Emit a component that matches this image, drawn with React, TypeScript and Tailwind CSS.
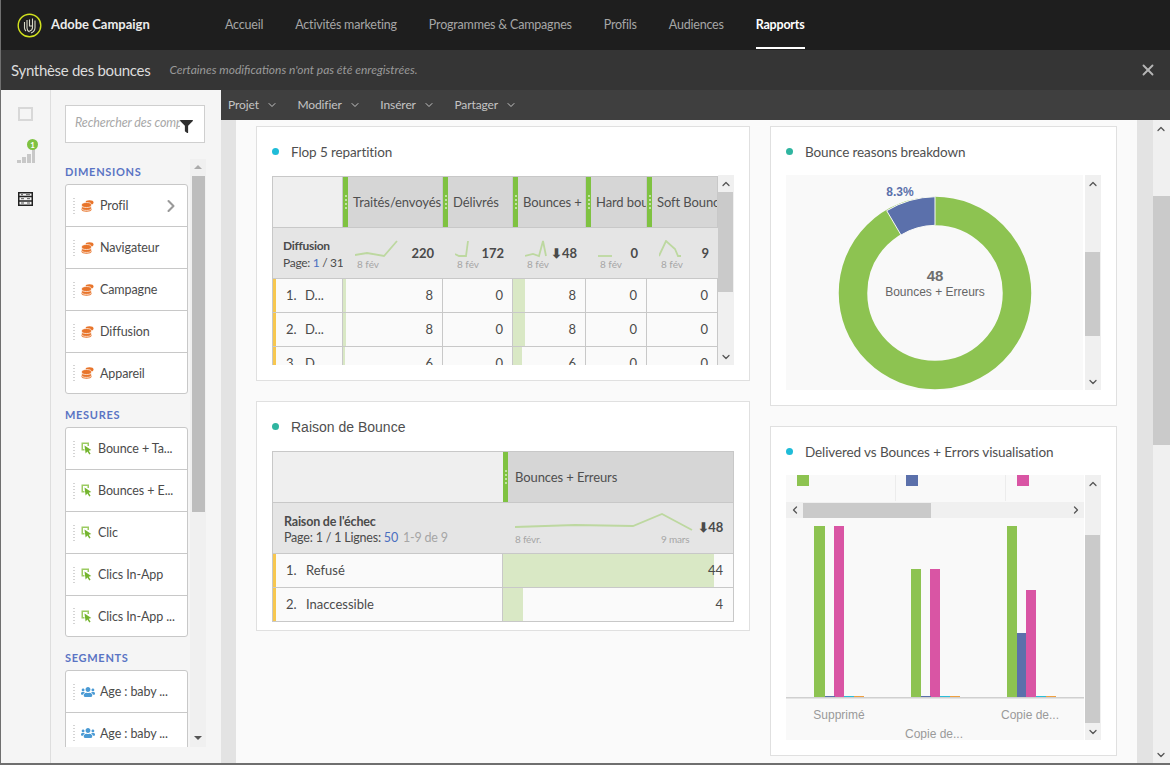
import { ChevronDown, ChevronLeft, ChevronRight, ChevronUp, X } from "lucide-react";
import { FaFilter, FaUsers } from "react-icons/fa";

const nav = ["Accueil", "Activités marketing", "Programmes & Campagnes", "Profils", "Audiences"];
const menu = ["Projet", "Modifier", "Insérer", "Partager"];
const dimensions = ["Profil", "Navigateur", "Campagne", "Diffusion", "Appareil"];
const measures = ["Bounce + Ta...", "Bounces + E...", "Clic", "Clics In-App", "Clics In-App ..."];
const segments = ["Age : baby ...", "Age : baby ..."];

const flopHeaders = ["Traités/envoyés", "Délivrés", "Bounces + Erreurs", "Hard bounces", "Soft Bounces"];
const flopSummary = [
  { value: "220", width: 44, points: "0,15 12,13 29,16 42,1" },
  { value: "172", width: 16, points: "0,14 4,16 11,16 13,1" },
  { value: "48", arrow: true, width: 24, points: "0,16 8,14 14,16 18,1 21,16" },
  { value: "0", width: 16, points: "0,16 14,16" },
  { value: "9", width: 24, points: "0,16 7,1 16,9 19,16 22,16" },
];
const flopRows = [
  { rank: "1.", values: ["8", "0", "8", "0", "0"], bars: [3, 0, 12] },
  { rank: "2.", values: ["8", "0", "8", "0", "0"], bars: [3, 0, 12] },
  { rank: "3.", values: ["6", "0", "6", "0", "0"], bars: [2, 0, 9] },
];

function Logo() {
  return (
    <svg width="25" height="25" viewBox="0 0 25 25" fill="none" className="shrink-0">
      <circle cx="12.500" cy="12.500" r="11.300" stroke="#d2e21e" strokeWidth="1.400" />
      <path d="M7.500 9v6c0 1 .5 2 1.500 3M10 7v8c0 1.500.8 3 2.500 4M15.500 5.500v9c0 2-1 3-3 3.500M18 7.500v7c0 2.500-1.500 4.500-4 5.500M12.500 6.500v6.500h3" stroke="#d9d9c8" strokeWidth="1.100" />
    </svg>
  );
}

function DataIcon() {
  return (
    <svg width="13" height="12" viewBox="0 0 13 12" className="shrink-0">
      <ellipse cx="8.500" cy="2.600" rx="4" ry="2.400" fill="#e8742a" />
      <path d="M0.500 8v1.500c0 1.300 2.200 2.300 5 2.300s5-1 5-2.300V8z" fill="#e8742a" />
      <ellipse cx="5.500" cy="8" rx="5" ry="2.400" fill="#e8742a" stroke="#fff" strokeWidth="0.700" />
      <ellipse cx="5.500" cy="5" rx="5" ry="2.500" fill="#e8742a" stroke="#fff" strokeWidth="0.700" />
    </svg>
  );
}

function MetricIcon() {
  return (
    <svg width="11" height="13" viewBox="0 0 11 13" className="shrink-0">
      <path d="M0.500 0.500h7.500v3.500h-1.500v-2h-4.500v5h1.500v1.500h-3z" fill="#9ccb62" />
      <path d="M3.500 3.500l6.800 4.500-2.600.7 1.900 3-1.300.8-1.900-3-1.800 2z" fill="#74b52e" />
    </svg>
  );
}

function TableIcon() {
  return (
    <svg width="15" height="14" viewBox="0 0 15 14" fill="none">
      <rect x="0.750" y="0.750" width="13.500" height="12.500" stroke="#222" strokeWidth="1.500" />
      <path d="M1 4.500h13M1 9h13" stroke="#222" strokeWidth="1.500" />
      <path d="M3 6.700h3M9 6.700h3M3 2.700h2M8 2.700h4M3 11h3M9 11h3" stroke="#555" />
    </svg>
  );
}

function SignalIcon() {
  return (
    <div className="relative ml-[3px] flex h-[23px] w-[20px] items-end gap-[1px]">
      <div className="h-[3px] w-[4px] bg-[#c8c8c8]" />
      <div className="h-[6px] w-[4px] bg-[#c8c8c8]" />
      <div className="h-[9px] w-[4px] bg-[#c8c8c8]" />
      <div className="h-[15px] w-[3px] bg-[#c8c8c8]" />
      <div className="absolute -right-[1px] -top-[1px] flex h-[11px] w-[11px] items-center justify-center rounded-full bg-[#7fc241] text-[8px] font-bold leading-none text-white">
        1
      </div>
    </div>
  );
}

function DragDots() {
  return (
    <div className="flex flex-col gap-[2px]">
      {[0, 1, 2, 3, 4, 5].map((i) => (
        <div key={i} className="h-[1px] w-[2px] bg-[#d4d4d4]" />
      ))}
    </div>
  );
}

function GroupLabel({ children }: { children: string }) {
  return <div className="mb-[6px] text-[11px] font-bold leading-[13px] tracking-[0.7px] text-[#5a74c4]">{children}</div>;
}

function ComponentList({
  items,
  icon,
  labelGap,
  more,
}: {
  items: string[];
  icon: React.ReactNode;
  labelGap: string;
  more?: boolean;
}) {
  return (
    <div className="w-[123px] rounded-[3px] border border-[#c8c8c8] bg-white">
      {items.map((item, index) => (
        <div key={index} className="flex h-[42px] items-center border-b border-[#c8c8c8] pl-[7px] last:h-[40px] last:border-b-0">
          <DragDots />
          <div className="ml-[6px] flex">{icon}</div>
          <span className={`${labelGap} flex-1 whitespace-nowrap text-[12.5px] tracking-[-0.1px] text-[#4b4b4b]`}>{item}</span>
          {more && index === 0 && <ChevronRight size={20} strokeWidth={2.500} className="mr-[6px] text-[#999]" />}
        </div>
      ))}
    </div>
  );
}

function Panel() {
  return (
    <div className="flex w-[170px] shrink-0 flex-col overflow-hidden bg-[#f5f5f5] pb-[16px] pl-[14px] pt-[15px]">
      <div className="flex h-[38px] w-[140px] shrink-0 items-center border border-[#cfcfcf] bg-white pl-[9px]">
        <span className="-mt-[2px] w-[105px] overflow-hidden whitespace-nowrap text-[12.5px] italic tracking-[-0.1px] text-[#a8a8a8]">
          Rechercher des composants
        </span>
        <FaFilter size={13} className="mt-[4px] text-[#2f2f2f]" />
      </div>
      <div className="mt-[16px] flex min-h-0 flex-1">
        <div className="min-h-0 w-[124px] overflow-hidden pt-[6px]">
          <GroupLabel>DIMENSIONS</GroupLabel>
          <ComponentList items={dimensions} icon={<DataIcon />} labelGap="ml-[6px] mt-[2px]" more />
          <div className="mt-[14px]">
            <GroupLabel>MESURES</GroupLabel>
          </div>
          <ComponentList items={measures} icon={<MetricIcon />} labelGap="ml-[6px] mt-[2px]" />
          <div className="mt-[14px]">
            <GroupLabel>SEGMENTS</GroupLabel>
          </div>
          <ComponentList items={segments} icon={<FaUsers size={14} className="text-[#4a9ad4]" />} labelGap="ml-[5px] mt-[2px]" />
        </div>
        <div className="ml-[1px] flex w-[16px] flex-col items-center bg-[#f0f0f0]">
          <div className="mt-[6px] h-0 w-0 border-x-[4px] border-b-[4px] border-x-transparent border-b-[#aaa]" />
          <div className="mt-[7px] h-[336px] w-[13px] bg-[#bdbdbd]" />
          <div className="mt-auto mb-[7px] h-0 w-0 border-x-[4px] border-t-[4px] border-x-transparent border-t-[#555]" />
        </div>
      </div>
    </div>
  );
}

function Spark({ points, width }: { points: string; width: number }) {
  return (
    <svg width={width} height="18" className="block shrink-0" fill="none">
      <polyline points={points} stroke="#bdd8a0" strokeWidth="1.800" />
    </svg>
  );
}

function VScroll({ thumbTop, thumbHeight, height }: { thumbTop: number; thumbHeight: number; height: number }) {
  return (
    <div className="relative w-[16px] shrink-0 bg-[#f0f0f0]" style={{ height }}>
      <ChevronUp size={12} strokeWidth={2.500} className="absolute left-[2px] top-[3px] text-[#555]" />
      <div className="absolute left-[0px] w-[15px] bg-[#cacaca]" style={{ top: thumbTop, height: thumbHeight }} />
      <ChevronDown size={12} strokeWidth={2.500} className="absolute bottom-[2px] left-[2px] text-[#555]" />
    </div>
  );
}

function CardTitle({ color, children, sans }: { color: string; children: string; sans?: boolean }) {
  return (
    <div className="flex h-[48px] items-center pl-[15px]">
      <div className="h-[7px] w-[7px] rounded-full" style={{ backgroundColor: color }} />
      <div className={`ml-[12px] ${sans ? "mt-[3px] font-['Liberation_Sans'] text-[14px]" : "mt-[2px] text-[13.5px] tracking-[-0.1px]"} text-[#4f4f4f]`}>
        {children}
      </div>
    </div>
  );
}

function HeaderCell({ label, className, textGap }: { label: string; className: string; textGap: string }) {
  return (
    <div className={`flex h-[52px] items-center overflow-hidden whitespace-nowrap border-y border-[#c8c8c8] bg-[#d6d6d6] text-[13px] tracking-[-0.1px] text-[#4f4f4f] ${className}`}>
      <div className="flex h-full w-[5px] shrink-0 flex-col items-center justify-center gap-[2px] bg-[#7fc241]">
        {[0, 1, 2, 3].map((i) => (
          <div key={i} className="h-[2px] w-[2px] rounded-full bg-[#d8ecc4]" />
        ))}
      </div>
      <span className={`${textGap} mt-[2px]`}>{label}</span>
    </div>
  );
}

function FlopRow({ rank, values, bars }: { rank: string; values: string[]; bars: number[] }) {
  return (
    <>
      <div className="flex h-[34px] items-center border-b border-r border-[#c8c8c8] bg-[#fafafa] text-[13px] text-[#4b4b4b]">
        <div className="h-full w-[3px] bg-[#f7c74f]" />
        <span className="ml-[10px] w-[19px]">{rank}</span>
        <span>D...</span>
      </div>
      {values.map((v, i) => (
        <div key={i} className="relative flex h-[34px] items-center justify-end border-b border-r border-[#c8c8c8] bg-[#fafafa] pr-[9px] text-[13px] text-[#4b4b4b]">
          {bars[i] > 0 && <div className="absolute inset-y-0 left-0 bg-[#d9e8c5]" style={{ width: bars[i] }} />}
          <span className="relative">{v}</span>
        </div>
      ))}
    </>
  );
}

function FlopTable() {
  return (
    <div className="ml-[15px] flex">
      <div className="h-[190px] w-[446px] overflow-hidden pt-[1px]">
        <div className="grid grid-cols-[70px_100px_70px_73px_61px_71px] border-l border-[#c8c8c8]">
          <div className="h-[52px] border-y border-r border-[#c8c8c8] bg-[#efefef]" />
          {flopHeaders.map((h) => (
            <HeaderCell key={h} label={h} className="border-r" textGap="ml-[5px]" />
          ))}

          <div className="flex h-[51px] flex-col justify-center border-b border-[#c8c8c8] bg-[#e5e5e5] pl-[10px] pt-[2px] text-[12px] leading-[17px] tracking-[-0.3px] text-[#4b4b4b]">
            <div className="font-bold">Diffusion</div>
            <div className="whitespace-nowrap">
              Page: <span className="text-[#4a6fc0]">1</span> / 31
            </div>
          </div>
          {flopSummary.map((s, i) => (
            <div key={i} className="relative flex h-[51px] items-start border-b border-[#c8c8c8] bg-[#e5e5e5] pl-[12px] pt-[12px]">
              <Spark points={s.points} width={s.width} />
              <span className="absolute bottom-[8px] left-[14px] text-[10px] leading-[12px] text-[#a6a6a6]">8 fév</span>
              <span className="absolute right-[9px] top-[16px] text-[13px] font-bold text-[#4a4a4a]">
                {s.arrow ? "⬇" : ""}
                {s.value}
              </span>
            </div>
          ))}

          {flopRows.map((row) => (
            <FlopRow key={row.rank} rank={row.rank} values={row.values} bars={row.bars} />
          ))}
        </div>
      </div>
      <VScroll thumbTop={17} thumbHeight={100} height={190} />
    </div>
  );
}

function ReasonRow({ rank, label, value, bar }: { rank: string; label: string; value: string; bar: number }) {
  return (
    <div className="grid h-[34px] grid-cols-[230px_1fr] border-b border-[#c8c8c8] bg-[#fafafa] text-[13px] text-[#4b4b4b]">
      <div className="flex items-center border-r border-[#c8c8c8]">
        <div className="h-full w-[3px] bg-[#f7c74f]" />
        <span className="ml-[10px] w-[20px]">{rank}</span>
        <span>{label}</span>
      </div>
      <div className="relative flex items-center justify-end pr-[10px]">
        <div className="absolute inset-y-0 left-0 bg-[#d9e8c5]" style={{ width: bar }} />
        <span className="relative">{value}</span>
      </div>
    </div>
  );
}

function ReasonTable() {
  return (
    <div className="mx-[15px] mt-[1px] border-x border-[#c8c8c8]">
      <div className="grid grid-cols-[230px_1fr]">
        <div className="h-[52px] border-y border-[#c8c8c8] bg-[#efefef]" />
        <HeaderCell label="Bounces + Erreurs" className="" textGap="ml-[7px]" />
      </div>
      <div className="relative flex h-[51px] items-center border-b border-[#c8c8c8] bg-[#e5e5e5] pl-[11px] text-[12.5px] leading-[16px] tracking-[-0.2px] text-[#4b4b4b]">
        <div className="mt-[4px]">
          <div className="font-bold">Raison de l'échec</div>
          <div className="whitespace-nowrap">
            Page: 1 / 1 Lignes: <span className="text-[#4a6fc0]">50</span> <span className="ml-[2px] text-[#a6a6a6]">1-9 de 9</span>
          </div>
        </div>
        <svg width="180" height="20" fill="none" className="absolute left-[242px] top-[10px] block">
          <polyline points="0,14 60,12 118,13 147,1 177,17" stroke="#bdd8a0" strokeWidth="1.800" />
        </svg>
        <span className="absolute bottom-[8px] left-[242px] text-[10px] leading-[12px] text-[#a6a6a6]">8 févr.</span>
        <span className="absolute bottom-[8px] left-[388px] text-[10px] leading-[12px] text-[#a6a6a6]">9 mars</span>
        <span className="absolute right-[10px] top-[16px] text-[13px] font-bold text-[#4a4a4a]">⬇48</span>
      </div>
      <ReasonRow rank="1." label="Refusé" value="44" bar={211} />
      <ReasonRow rank="2." label="Inaccessible" value="4" bar={20} />
    </div>
  );
}

function Donut() {
  return (
    <svg width="297" height="215" viewBox="0 0 297 215" className="block shrink-0">
      <circle cx="149" cy="118" r="82" fill="none" stroke="#8dc351" strokeWidth="28.500" />
      <path d="M149 21.700A96.300 96.300 0 0 0 100.700 35.700L115 60A67.700 67.700 0 0 1 149 50.300Z" fill="#5b70ab" stroke="#f9f9f9" strokeWidth="1" />
      <text x="114" y="21" fontFamily="Liberation Sans" fontSize="12" fontWeight="700" textAnchor="middle" fill="#5b70ab">8.3%</text>
      <text x="149" y="106" fontFamily="Liberation Sans" fontSize="15" fontWeight="700" textAnchor="middle" fill="#6e6e6e">48</text>
      <text x="149" y="121" fontFamily="Liberation Sans" fontSize="12" textAnchor="middle" fill="#666">Bounces + Erreurs</text>
    </svg>
  );
}

function BarChart() {
  const bars = [
    { x: 28, w: 11, top: 526, c: "#8dc351" },
    { x: 48, w: 10, top: 526, c: "#d955a4" },
    { x: 125, w: 10, top: 569, c: "#8dc351" },
    { x: 144, w: 10, top: 569, c: "#d955a4" },
    { x: 221, w: 10, top: 526, c: "#8dc351" },
    { x: 231, w: 9, top: 633, c: "#5b70ab" },
    { x: 240, w: 10, top: 590, c: "#d955a4" },
  ];
  const ticks = [39, 135, 231];
  return (
    <svg width="298" height="219" viewBox="0 0 298 219" className="block">
      {bars.map((b, i) => (
        <rect key={i} x={b.x} y={b.top - 521} width={b.w} height={697 - b.top} fill={b.c} />
      ))}
      {ticks.map((t, i) => (
        <g key={i}>
          <rect x={t} y="175" width="10" height="1" fill={i === 2 ? "transparent" : "#5b70ab"} />
          <rect x={t + 19} y="175" width="10" height="1" fill="#2bbcd8" />
          <rect x={t + 29} y="175" width="10" height="1" fill="#f0a040" />
        </g>
      ))}
      <rect x="0" y="176" width="298" height="1.500" fill="#d0d0d0" />
      <text x="53" y="198" fontFamily="Liberation Sans" fontSize="12" textAnchor="middle" fill="#9a9a9a">Supprimé</text>
      <text x="244" y="198" fontFamily="Liberation Sans" fontSize="12" textAnchor="middle" fill="#9a9a9a">Copie de...</text>
      <text x="148" y="217" fontFamily="Liberation Sans" fontSize="12" textAnchor="middle" fill="#9a9a9a">Copie de...</text>
    </svg>
  );
}

function VisualCard() {
  return (
    <div className="flex">
      <div className="w-[298px] bg-[#f9f9f9]">
        <div className="grid h-[26px] grid-cols-[110px_110px_78px]">
          <div className="border-r border-[#ececec] pl-[11px]">
            <div className="h-[11px] w-[12px] bg-[#8dc351]" />
          </div>
          <div className="border-r border-[#ececec] pl-[10px]">
            <div className="h-[11px] w-[12px] bg-[#5b70ab]" />
          </div>
          <div className="pl-[11px]">
            <div className="h-[11px] w-[12px] bg-[#d955a4]" />
          </div>
        </div>
        <div className="mt-[1px] flex h-[16px] items-center bg-[#f0f0f0]">
          <ChevronLeft size={12} strokeWidth={2.500} className="ml-[2px] w-[14px] shrink-0 text-[#555]" />
          <div className="ml-[1px] h-[15px] w-[128px] bg-[#cacaca]" />
          <ChevronRight size={12} strokeWidth={2.500} className="ml-auto mr-[2px] text-[#555]" />
        </div>
        <div className="pt-[3px]">
          <BarChart />
        </div>
      </div>
      <div className="ml-[1px]">
        <VScroll thumbTop={60} thumbHeight={188} height={265} />
      </div>
    </div>
  );
}

export default function App() {
  return (
    <div className="flex h-[765px] w-[1170px] flex-col overflow-hidden border-b-2 border-l border-[#6f6f6f] bg-[#f5f5f5] font-['Lato','Open_Sans',sans-serif]">
      <header className="flex h-[50px] shrink-0 items-center bg-[#1e1e1e] pl-[16px]">
        <Logo />
        <div className="ml-[9px] w-[174px] text-[13px] font-bold text-[#ececec]">Adobe Campaign</div>
        <nav className="flex items-center gap-[32px] text-[12.5px] tracking-[-0.2px] text-[#a6a6a6]">
          {nav.map((n) => (
            <span key={n}>{n}</span>
          ))}
          <span className="relative font-bold text-white">
            Rapports
            <span className="absolute inset-x-0 -bottom-[15px] h-[2px] bg-white" />
          </span>
        </nav>
      </header>

      <div className="flex h-[40px] shrink-0 items-center bg-[#353535] pl-[10px] pr-[13px]">
        <div className="text-[15px] tracking-[-0.3px] text-[#dcdcdc]">Synthèse des bounces</div>
        <div className="ml-[19px] text-[12px] italic text-[#9a9a9a]">Certaines modifications n'ont pas été enregistrées.</div>
        <X size={18} strokeWidth={2.500} className="ml-auto text-[#b5b5b5]" />
      </div>

      <div className="flex min-h-0 flex-1">
        <div className="flex w-[50px] shrink-0 flex-col items-center border-r border-[#dedede] bg-[#f5f5f5] pt-[17px]">
          <div className="mr-[1px] h-[14px] w-[15px] border-2 border-[#d8d8d8]" />
          <div className="mt-[19px]">
            <SignalIcon />
          </div>
          <div className="mr-[1px] mt-[29px] flex">
            <TableIcon />
          </div>
        </div>
        <Panel />

        <div className="flex min-w-0 flex-1 flex-col">
          <div className="flex h-[30px] shrink-0 items-center gap-[19.5px] bg-[#3f3f3f] pl-[7px] text-[12px] tracking-[-0.1px] text-[#c4c4c4]">
            {menu.map((m) => (
              <div key={m} className="flex items-center gap-[7px]">
                {m}
                <ChevronDown size={12} strokeWidth={2} />
              </div>
            ))}
          </div>
          <div className="flex min-h-0 flex-1">
            <div className="w-[15px] shrink-0 bg-[#e3e3e3]" />
            <main className="flex min-w-0 flex-1 gap-[20px] overflow-hidden bg-[#fafafa] pl-[20px] pt-[6px]">
              <div className="flex w-[494px] shrink-0 flex-col gap-[20px]">
                <section className="h-[255px] border border-[#e0e0e0] bg-white">
                  <CardTitle color="#1fbcd8">Flop 5 repartition</CardTitle>
                  <FlopTable />
                </section>
                <section className="h-[230px] border border-[#e0e0e0] bg-white">
                  <CardTitle color="#2fb5a0" sans>
                    Raison de Bounce
                  </CardTitle>
                  <ReasonTable />
                </section>
              </div>
              <div className="flex w-[347px] shrink-0 flex-col gap-[20px]">
                <section className="h-[280px] border border-[#e0e0e0] bg-white">
                  <CardTitle color="#2fb5a0">Bounce reasons breakdown</CardTitle>
                  <div className="ml-[15px] flex">
                    <div className="h-[215px] overflow-hidden bg-[#f9f9f9]">
                      <Donut />
                    </div>
                    <div className="ml-[2px]">
                      <VScroll thumbTop={77} thumbHeight={84} height={215} />
                    </div>
                  </div>
                </section>
                <section className="h-[330px] border border-[#e0e0e0] bg-white">
                  <CardTitle color="#1fbcd8">Delivered vs Bounces + Errors visualisation</CardTitle>
                  <div className="ml-[15px]">
                    <VisualCard />
                  </div>
                </section>
              </div>
            </main>
            <div className="w-[16px] shrink-0 bg-[#e3e3e3]" />
            <div className="relative w-[17px] shrink-0 bg-[#f0f0f0]">
              <ChevronUp size={12} strokeWidth={2.500} className="absolute left-[2px] top-[3px] text-[#555]" />
              <div className="absolute left-0 top-[76px] h-[249px] w-[17px] bg-[#cacaca]" />
              <ChevronDown size={12} strokeWidth={2.500} className="absolute bottom-[2px] left-[2px] text-[#555]" />
            </div>
          </div>
        </div>
      </div>
    </div>
  );
}
